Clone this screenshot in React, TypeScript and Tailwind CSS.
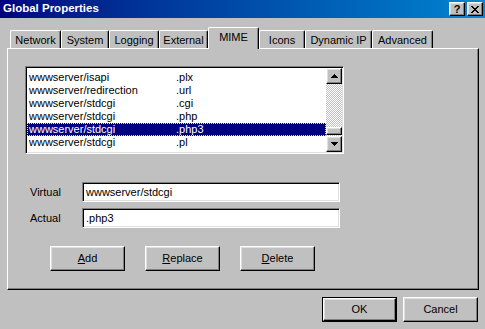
import React from "react";

const raised =
  "border border-t-white border-l-white border-r-black border-b-black shadow-[inset_-1px_-1px_#808080,inset_1px_1px_#dfdfdf] bg-[#c0c0c0]";
const sunken =
  "border border-t-[#808080] border-l-[#808080] border-r-white border-b-white shadow-[inset_1px_1px_#000,inset_-1px_-1px_#dfdfdf] bg-white";

const tabs = [
  { label: "Network", w: "w-[51px]" },
  { label: "System", w: "w-[48px]" },
  { label: "Logging", w: "w-[50px]" },
  { label: "External", w: "w-[49px]" },
  { label: "MIME", w: "w-[51px]", active: true },
  { label: "Icons", w: "w-[46px]" },
  { label: "Dynamic IP", w: "w-[67px]" },
  { label: "Advanced", w: "w-[61px]" },
];

const rows = [
  ["wwwserver/isapi", ".plx"],
  ["wwwserver/redirection", ".url"],
  ["wwwserver/stdcgi", ".cgi"],
  ["wwwserver/stdcgi", ".php"],
  ["wwwserver/stdcgi", ".php3"],
  ["wwwserver/stdcgi", ".pl"],
];

const Arrow = ({ down }: { down?: boolean }) => (
  <svg width="7" height="4" viewBox="0 0 7 4" shapeRendering="crispEdges">
    <path
      d={down ? "M0 0h7v1h-1v1h-1v1h-1v1h-1v-1h-1v-1h-1v-1h-1z" : "M3 0h1v1h1v1h1v1h1v1h-7v-1h1v-1h1v-1h1z"}
      fill="#000"
    />
  </svg>
);

function Btn({ children, def }: { children: React.ReactNode; def?: boolean }) {
  const inner = (
    <div className={`${raised} w-full h-full flex items-center justify-center`}>{children}</div>
  );
  if (def) {
    return <div className="w-[75px] h-[25px] border border-black">{inner}</div>;
  }
  return <div className="w-[75px] h-[25px]">{inner}</div>;
}

export default function App() {
  return (
    <div className="w-[485px] h-[329px] bg-[#c0c0c0] text-black text-[11px] leading-none font-['Liberation_Sans',Arial,sans-serif] overflow-hidden">
      {/* title bar */}
      <div className="h-[18px] flex items-center pl-[3px] pr-[2px] bg-gradient-to-r from-[#000080] to-[#1084d0]">
        <span className="text-white font-bold text-[11.5px]">Global Properties</span>
        <div className="ml-auto flex gap-[2px]">
          <div className={`${raised} w-[16px] h-[14px] flex items-center justify-center font-bold text-[11px]`}>?</div>
          <div className={`${raised} w-[16px] h-[14px] flex items-center justify-center`}>
            <svg width="8" height="7" viewBox="0 0 8 7" shapeRendering="crispEdges">
              <path
                d="M0 0h2v1h-2zM6 0h2v1h-2zM1 1h2v1h-2zM5 1h2v1h-2zM2 2h4v1h-4zM3 3h2v1h-2zM2 4h4v1h-4zM1 5h2v1h-2zM5 5h2v1h-2zM0 6h2v1h-2zM6 6h2v1h-2z"
                fill="#000"
              />
            </svg>
          </div>
        </div>
      </div>

      {/* tabs */}
      <div className="mt-[9px] h-[21px] pl-[10px] flex items-end">
        {tabs.map((t) =>
          t.active ? (
            <div
              key={t.label}
              className={`${t.w} h-[22px] -mb-[1px] relative z-10 bg-[#c0c0c0] border-t border-l border-r border-t-white border-l-white border-r-black rounded-t-[2px] shadow-[inset_-1px_0_#808080] flex justify-center pt-[4px]`}
            >
              {t.label}
            </div>
          ) : (
            <div
              key={t.label}
              className={`${t.w} h-[18px] border-t border-l border-r border-t-white border-l-white border-r-black rounded-t-[2px] shadow-[inset_-1px_0_#808080] flex justify-center pt-[4px]`}
            >
              {t.label}
            </div>
          )
        )}
      </div>

      {/* panel */}
      <div className="ml-[7px] w-[472px] h-[242px] border border-t-white border-l-white border-r-black border-b-black shadow-[inset_-1px_-1px_#808080] pl-[17px] pt-[17px]">
        <div className={`${sunken} w-[319px] h-[88px] flex`}>
          <div className="flex-1 pt-[4px] pl-[1px] overflow-hidden">
            {rows.map(([a, b], i) =>
              i === 4 ? (
                <div
                  key={i}
                  className="h-[13px] flex items-center bg-[#000080] text-white border border-dotted border-[#ffff00]"
                >
                  <span className="w-[148px] pl-[1px]">{a}</span>
                  <span>{b}</span>
                </div>
              ) : (
                <div key={i} className="h-[13px] flex items-center px-[1px]">
                  <span className="w-[148px] pl-[1px]">{a}</span>
                  <span>{b}</span>
                </div>
              )
            )}
          </div>
          <div className="w-[16px] flex flex-col mt-[1px] mb-[1px] mr-[1px]">
            <div className={`${raised} h-[16px] flex items-center justify-center`}>
              <Arrow />
            </div>
            <div className="flex-1 flex flex-col justify-end pb-[1px] bg-[repeating-conic-gradient(#c0c0c0_0%_25%,#ffffff_0%_50%)] bg-[length:2px_2px]">
              <div className={`${raised} h-[8px]`} />
            </div>
            <div className={`${raised} h-[16px] flex items-center justify-center`}>
              <Arrow down />
            </div>
          </div>
        </div>

        <div className="mt-[28px] ml-[5px] flex flex-col gap-[6px]">
          <div className="flex items-center">
            <span className="w-[52px]">Virtual</span>
            <div className={`${sunken} w-[258px] h-[20px] flex items-center pl-[3px]`}>wwwserver/stdcgi</div>
          </div>
          <div className="flex items-center">
            <span className="w-[52px]">Actual</span>
            <div className={`${sunken} w-[258px] h-[20px] flex items-center pl-[3px]`}>.php3</div>
          </div>
        </div>

        <div className="mt-[18px] ml-[25px] flex gap-[20px]">
          <Btn>
            <span>
              <u>A</u>dd
            </span>
          </Btn>
          <Btn>
            <span>
              <u>R</u>eplace
            </span>
          </Btn>
          <Btn>
            <span>
              <u>D</u>elete
            </span>
          </Btn>
        </div>
      </div>

      {/* dialog buttons */}
      <div className="mt-[7px] pr-[7px] flex justify-end gap-[6px]">
        <Btn def>OK</Btn>
        <Btn>Cancel</Btn>
      </div>
    </div>
  );
}
